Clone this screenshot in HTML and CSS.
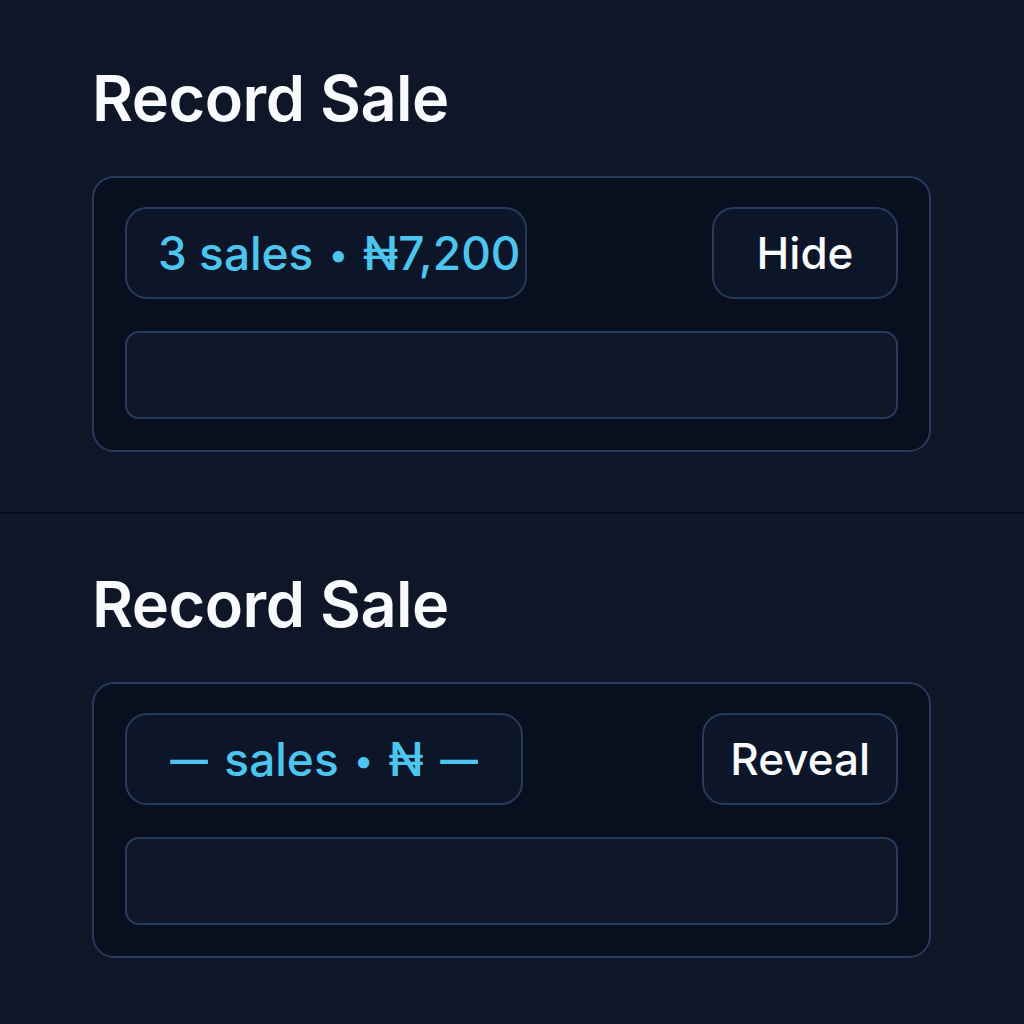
FILE: index.html
```html
<!DOCTYPE html>
<html lang="en">
<head>
<meta charset="utf-8">
<title>Record Sale</title>
<link rel="stylesheet" href="styles.css">
</head>
<body>
  <section class="panel panel-first">
    <h1 class="title">Record Sale</h1>
    <div class="card">
      <div class="row">
        <div class="summary"><span>3 sales <span class="sep">•</span> ₦7,200</span></div>
        <button class="toggle">Hide</button>
      </div>
      <div class="field"></div>
    </div>
  </section>
  <section class="panel panel-second">
    <h1 class="title">Record Sale</h1>
    <div class="card">
      <div class="row">
        <div class="summary summary-hidden"><span><span class="dash">—</span> sales <span class="sep">•</span> ₦ <span class="dash">—</span></span></div>
        <button class="toggle">Reveal</button>
      </div>
      <div class="field"></div>
    </div>
  </section>
</body>
</html>
```
FILE: styles.css
```css
* { box-sizing: border-box; }

html, body {
  margin: 0;
  padding: 0;
  background: #0e1628;
  font-family: Inter, "Noto Sans", "DejaVu Sans", sans-serif;
}

.panel {
  height: 512px;
  padding-left: 92px;
  padding-right: 93px;
}

.panel-first { padding-top: 67px; }

.panel-second {
  border-top: 2px solid #070c18;
  padding-top: 59px;
}

.title {
  margin: 0 0 46px 0;
  font-size: 63px;
  line-height: 63px;
  font-weight: 600;
  color: #f8fafc;
  letter-spacing: -0.5px;
}

.card {
  background: #080f1e;
  border: 2px solid #273b5d;
  border-radius: 22px;
  padding: 29px 31px 31px 31px;
  display: flex;
  flex-direction: column;
  gap: 32px;
}

.row {
  display: flex;
  justify-content: space-between;
  align-items: center;
}

.summary {
  width: 402px;
  height: 92px;
  padding-left: 31px;
  border: 2px solid #273b5d;
  border-radius: 22px;
  background: #0d1629;
  color: #4cc6ee;
  font-size: 46px;
  font-weight: 500;
  display: flex;
  align-items: center;
  justify-content: flex-start;
  white-space: nowrap;
}

.summary-hidden {
  width: 398px;
  padding-left: 0;
  justify-content: center;
}

.sep {
  font-size: 36px;
  vertical-align: 3px;
  padding: 0 3px;
}

.dash {
  display: inline-block;
  transform: scaleX(0.82);
}

.toggle {
  height: 92px;
  min-width: 186px;
  padding: 0 26px;
  border: 2px solid #273b5d;
  border-radius: 22px;
  background: #0d1629;
  color: #f8fafc;
  font-family: inherit;
  font-size: 44px;
  font-weight: 500;
}

.field {
  height: 88px;
  border: 2px solid #273b5d;
  border-radius: 14px;
  background: #0e1628;
}
```
